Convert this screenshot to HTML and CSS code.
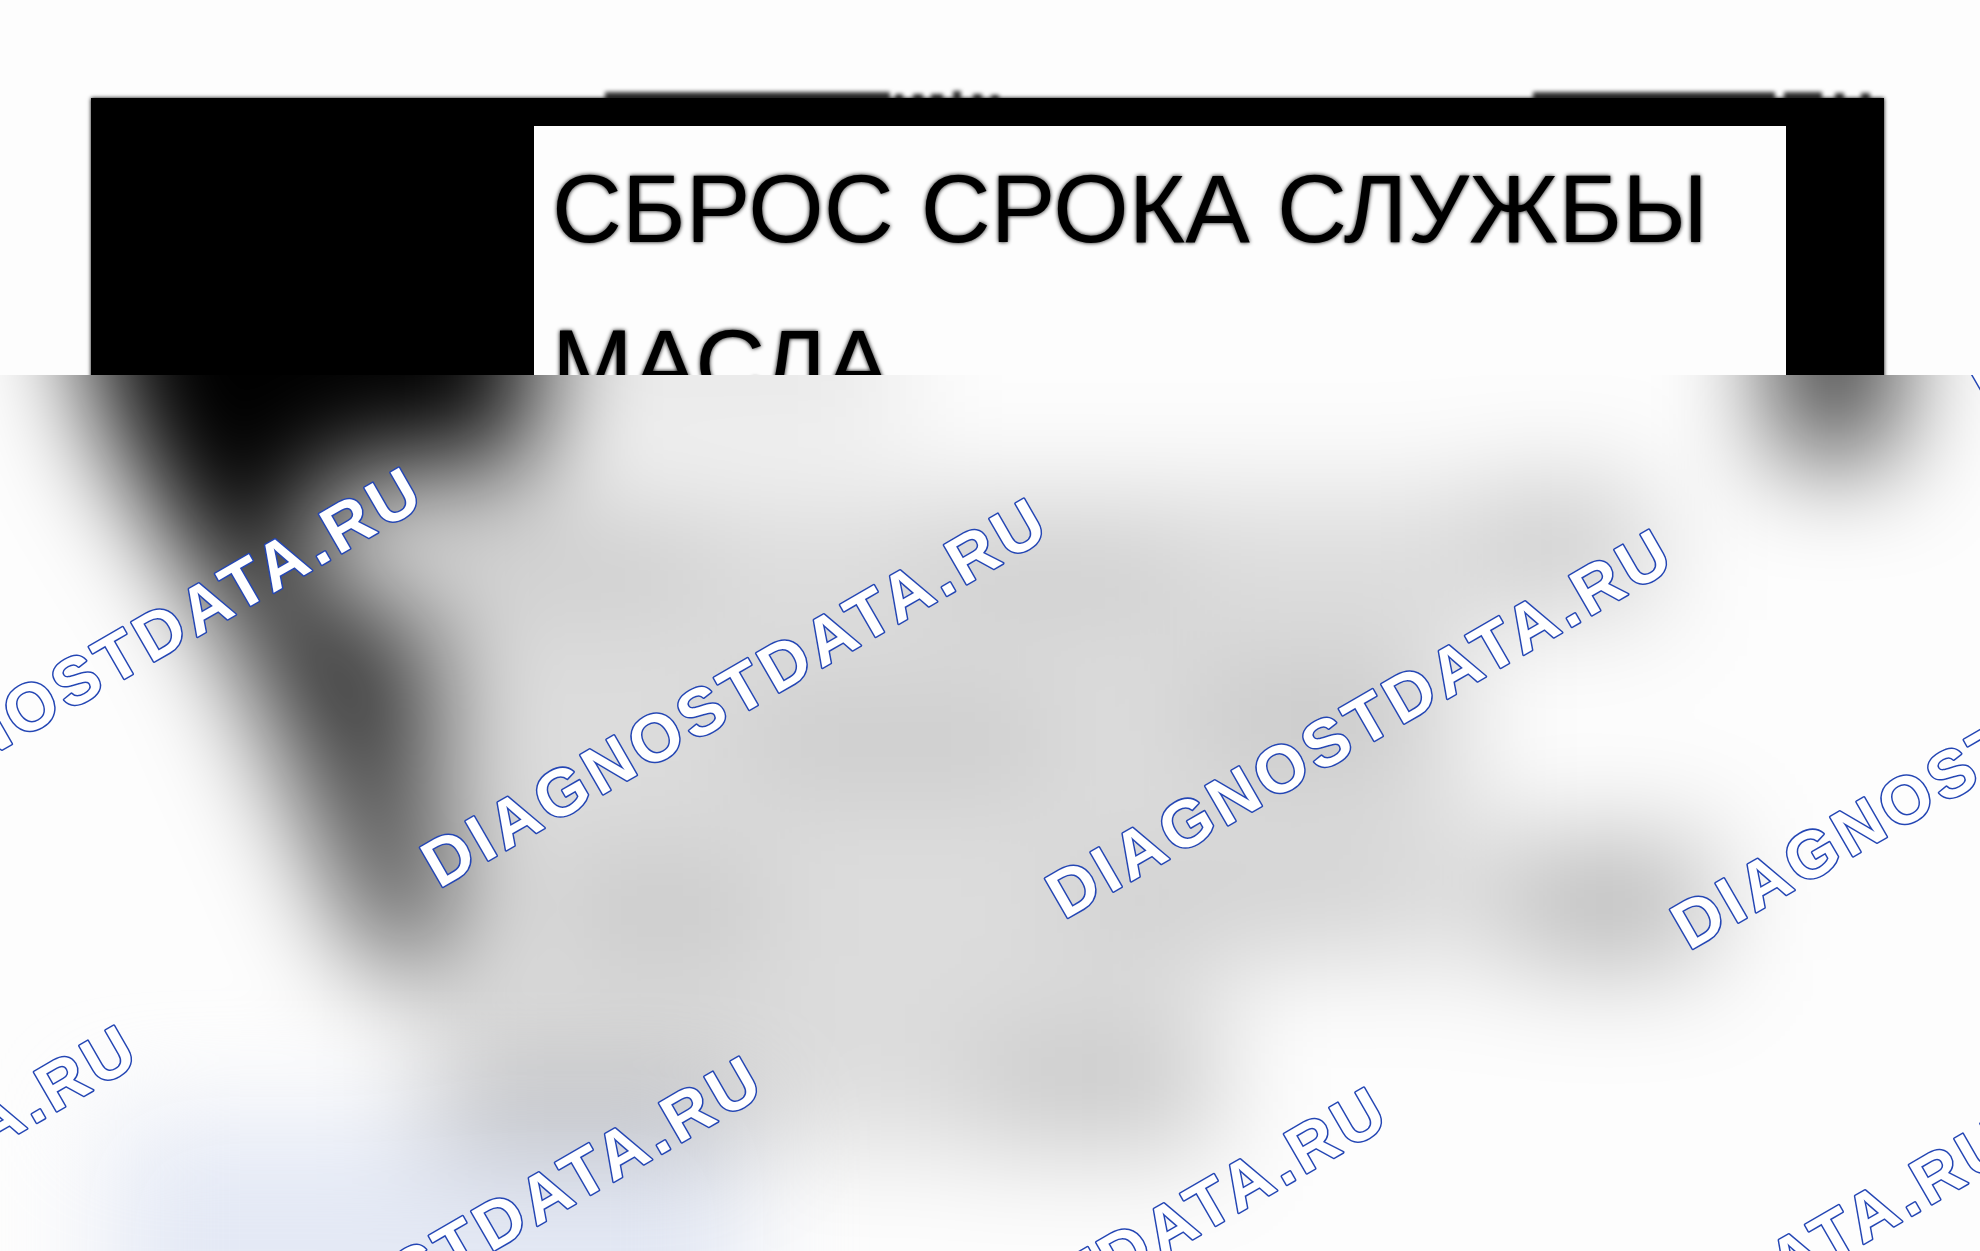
FILE: index.html
```html
<!DOCTYPE html>
<html lang="ru">
<head>
    <meta charset="utf-8">
    <title>Сброс срока службы масла</title>
    <link rel="stylesheet" href="styles.css">
</head>
<body>
    <main class="page">
        <section class="preview">
            <svg class="edge" viewBox="0 0 1793 8" preserveAspectRatio="none" aria-hidden="true">
                <path d="M514 2h285v9h-285zM804 4h8v7h-8zM822 4h10v7h-10zM840 4h12v7h-12zM862 1h8v10h-8zM882 4h9v7h-9zM900 5h8v6h-8z"/>
                <path d="M1442 2h242v9h-242zM1693 2h38v9h-38zM1744 3h9v8h-9zM1770 3h9v8h-9z"/>
            </svg>
            <div class="frame">
                <h1 class="screen">СБРОС СРОКА СЛУЖБЫ<br>МАСЛА</h1>
            </div>
        </section>

        <svg class="hidden-part" viewBox="0 375 1980 876" preserveAspectRatio="xMinYMin slice">
            <defs>
                <filter id="blur" filterUnits="userSpaceOnUse" x="-300" y="0" width="2600" height="1600" color-interpolation-filters="sRGB">
                    <feGaussianBlur stdDeviation="54"/>
                </filter>
            </defs>

            <g filter="url(#blur)">
                <!-- button label box -->
                <path class="tint" d="M110 1120H740V1500H110z"/>
                <path class="box" d="M300 480L880 490H1660V620H1470V830H1720V960H1220V1150H430V900L300 560z"/>
                <path class="line" d="M534 300H900V430H534z"/>
                <!-- text rows -->
                <path class="line" d="M430 525H700V595H430zM920 540H1180V600H920zM1480 480H1630V580H1480z"/>
                <path class="line" d="M740 700H1050V780H740zM1190 670H1420V770H1190z"/>
                <path class="line" d="M560 860H760V960H560zM1060 880H1400V930H1060z"/>
                <path class="line dark" d="M1520 850H1700V970H1520z"/>
                <path class="line" d="M430 1050H740V1160H430zM980 1040H1210V1150H980z"/>
                <!-- left column and pointer -->
                <path d="M84 100H534V462L340 470L250 590H210L110 430L84 330z"/>
                <path class="pointer" d="M190 550L320 570L440 640L430 800z"/>
                <path class="pointer" d="M190 550L300 600L430 800L450 900L430 970H375z"/>
                <path class="bar" d="M1780 200H1890V455H1780z"/>
            </g>

            <g class="watermark">
                <text transform="translate(1978 393) rotate(-30)">DIAGNOSTDATA.RU</text>
                <text transform="translate(-186 858) rotate(-30)">DIAGNOSTDATA.RU</text>
                <text transform="translate(439 889) rotate(-30)">DIAGNOSTDATA.RU</text>
                <text transform="translate(1064 920) rotate(-30)">DIAGNOSTDATA.RU</text>
                <text transform="translate(1689 951) rotate(-30)">DIAGNOSTDATA.RU</text>
                <text transform="translate(-471 1416) rotate(-30)">DIAGNOSTDATA.RU</text>
                <text transform="translate(154 1447) rotate(-30)">DIAGNOSTDATA.RU</text>
                <text transform="translate(779 1478) rotate(-30)">DIAGNOSTDATA.RU</text>
                <text transform="translate(1404 1509) rotate(-30)">DIAGNOSTDATA.RU</text>
            </g>
        </svg>
    </main>
</body>
</html>
```

FILE: styles.css
```css
body {
    margin: 0;
    background-color: #fdfdfd;
    font-family: "Liberation Sans", Arial, sans-serif;
}
.page {
    display: grid;
    grid-template-rows: 30vh 70vh;
    height: 100vh;
    overflow: hidden;
}
.preview {
    display: flex;
    flex-direction: column;
    padding: 90px 96px 0 91px;
    overflow: hidden;
}
.edge {
    display: block;
    flex: none;
    width: 100%;
    height: 8px;
    overflow: visible;
    fill: #333;
    filter: blur(2px);
}
.frame {
    position: relative;
    flex: none;
    padding: 28px 98px 0 443px;
    background-color: #000;
    box-shadow: 0 0 4px #000;
}
.screen {
    margin: 0;
    padding: 5px 20px 60px 18px;
    background-color: #fdfdfd;
    color: #000;
    font-size: 97px;
    font-weight: normal;
    line-height: 155px;
    white-space: nowrap;
    text-shadow: 0 0 4px #000;
}
.hidden-part {
    display: block;
    width: 100%;
    height: 100%;
}
.tint {
    fill: #e4e9f5;
}
.box {
    fill: #000;
    fill-opacity: 0.13;
}
.line {
    fill: #000;
    fill-opacity: 0.09;
}
.dark {
    fill-opacity: 0.17;
}
.pointer {
    fill: #000;
    fill-opacity: 0.7;
}
.bar {
    fill: #000;
    fill-opacity: 0.85;
}
.watermark {
    fill: #fff;
    stroke: #2446b4;
    stroke-width: 3;
    stroke-linejoin: round;
    paint-order: stroke;
    font-size: 66px;
    font-weight: bold;
    letter-spacing: 5px;
}
```
